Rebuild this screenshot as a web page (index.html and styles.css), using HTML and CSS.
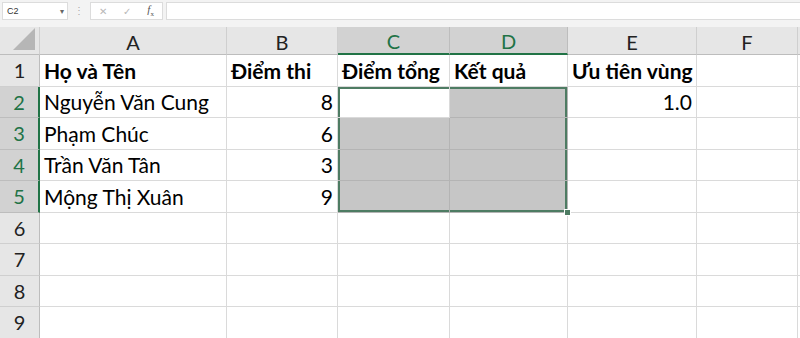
FILE: index.html
```html
<!DOCTYPE html>
<html lang="vi">
<head>
  <meta charset="UTF-8">
  <meta name="viewport" content="width=device-width, initial-scale=1.0">
  <title>Bảng điểm</title>
  <link rel="stylesheet" href="styles.css">
</head>
<body>
  <div class="formula-bar">
    <div class="name-box">
      <span>C2</span>
      <span class="arrow">&#9662;</span>
    </div>
    <div class="dots">&#8942;</div>
    <div class="fx-box">
      <span class="icon">&#10005;</span>
      <span class="icon">&#10003;</span>
      <span class="icon fx"><i>f</i><sub>x</sub></span>
    </div>
    <div class="input"></div>
  </div>

  <div class="sheet">
    <!-- header row -->
    <div class="corner"><span class="tri"></span></div>
    <div class="ch">A</div>
    <div class="ch">B</div>
    <div class="ch sel">C</div>
    <div class="ch sel">D</div>
    <div class="ch">E</div>
    <div class="ch">F</div>
    <div class="ch"></div>

    <!-- row 1 -->
    <div class="rh">1</div>
    <div class="c bold">Họ và Tên</div>
    <div class="c bold">Điểm thi</div>
    <div class="c bold">Điểm tổng</div>
    <div class="c bold">Kết quả</div>
    <div class="c bold">Ưu tiên vùng</div>
    <div class="c"></div>
    <div class="c"></div>

    <!-- row 2 (C2 is the active cell) -->
    <div class="rh sel">2</div>
    <div class="c">Nguyễn Văn Cung</div>
    <div class="c num">8</div>
    <div class="c rng top left"></div>
    <div class="c fill rng top right"></div>
    <div class="c num">1.0</div>
    <div class="c"></div>
    <div class="c"></div>

    <!-- row 3 -->
    <div class="rh sel">3</div>
    <div class="c">Phạm Chúc</div>
    <div class="c num">6</div>
    <div class="c fill rng left"></div>
    <div class="c fill rng right"></div>
    <div class="c"></div>
    <div class="c"></div>
    <div class="c"></div>

    <!-- row 4 -->
    <div class="rh sel">4</div>
    <div class="c">Trần Văn Tân</div>
    <div class="c num">3</div>
    <div class="c fill rng left"></div>
    <div class="c fill rng right"></div>
    <div class="c"></div>
    <div class="c"></div>
    <div class="c"></div>

    <!-- row 5 -->
    <div class="rh sel">5</div>
    <div class="c">Mộng Thị Xuân</div>
    <div class="c num">9</div>
    <div class="c fill rng left bottom"></div>
    <div class="c fill rng right bottom handle"></div>
    <div class="c"></div>
    <div class="c"></div>
    <div class="c"></div>

    <!-- rows 6-9 -->
    <div class="rh">6</div>
    <div class="c"></div><div class="c"></div><div class="c"></div><div class="c"></div><div class="c"></div><div class="c"></div><div class="c"></div>
    <div class="rh">7</div>
    <div class="c"></div><div class="c"></div><div class="c"></div><div class="c"></div><div class="c"></div><div class="c"></div><div class="c"></div>
    <div class="rh">8</div>
    <div class="c"></div><div class="c"></div><div class="c"></div><div class="c"></div><div class="c"></div><div class="c"></div><div class="c"></div>
    <div class="rh">9</div>
    <div class="c"></div><div class="c"></div><div class="c"></div><div class="c"></div><div class="c"></div><div class="c"></div><div class="c"></div>
  </div>
</body>
</html>
```

FILE: styles.css
```css
body {
  margin: 0;
  background-color: #f3f3f3;
  font-family: Lato, "Open Sans", sans-serif;
  color: #000;
  overflow: hidden;
}

.formula-bar {
  display: flex;
  align-items: flex-start;
  height: 27px;
  padding: 2px 0 0 2px;
  box-sizing: border-box;
  font-family: "Liberation Sans", Arial, sans-serif;
}

.name-box {
  display: flex;
  justify-content: space-between;
  align-items: center;
  width: 66px;
  height: 18px;
  background-color: #fff;
  border: 1px solid #dcdcdc;
  box-sizing: border-box;
  padding: 0 3px 0 4px;
  font-size: 9px;
  color: #333;
}

.name-box .arrow {
  font-size: 8px;
  color: #666;
}

.dots {
  width: 22px;
  line-height: 18px;
  text-align: center;
  font-size: 10px;
  color: #aaa;
}

.fx-box {
  display: flex;
  justify-content: space-around;
  align-items: center;
  width: 73px;
  height: 18px;
  background-color: #fff;
  border: 1px solid #dcdcdc;
  box-sizing: border-box;
}

.fx-box .icon {
  font-size: 10px;
  color: #b8b8b8;
}

.fx-box .fx {
  font-family: "Liberation Serif", serif;
  color: #555;
  font-size: 11px;
}

.fx-box .fx sub {
  font-size: 7px;
}

.input {
  flex: 1;
  height: 18px;
  margin-left: 3px;
  background-color: #fff;
  border: 1px solid #dcdcdc;
  border-right: none;
  box-sizing: border-box;
}

.sheet {
  display: grid;
  grid-template-columns: 40px 187px 111px 112px 118px 129px 101px 1fr;
  grid-template-rows: 28px repeat(9, 31.5px);
  background-color: #fff;
}

.corner {
  position: relative;
  background-color: #e6e6e6;
  border-right: 1px solid #cfcfcf;
  border-bottom: 1px solid #bdbdbd;
}

.corner .tri {
  position: absolute;
  right: 4px;
  bottom: 4px;
  width: 0;
  height: 0;
  border-left: 22px solid transparent;
  border-bottom: 22px solid #b6b6b6;
}

.ch {
  display: flex;
  justify-content: center;
  align-items: center;
  background-color: #e6e6e6;
  border-right: 1px solid #cfcfcf;
  border-bottom: 1px solid #bdbdbd;
  font-size: 20px;
  color: #222;
  padding-top: 2px;
}

.ch.sel {
  background-color: #d2d2d2;
  color: #217346;
  border-bottom: 2px solid #217346;
  border-right-color: #bdbdbd;
}

.rh {
  display: flex;
  justify-content: center;
  align-items: center;
  background-color: #e6e6e6;
  border-right: 1px solid #bdbdbd;
  border-bottom: 1px solid #cfcfcf;
  font-size: 20px;
  color: #222;
}

.rh.sel {
  background-color: #d2d2d2;
  color: #217346;
  border-right: 2px solid #217346;
  border-bottom-color: #bdbdbd;
}

.c {
  display: flex;
  align-items: center;
  padding: 0 4px;
  border-right: 1px solid #dadada;
  border-bottom: 1px solid #dadada;
  font-size: 21px;
  white-space: nowrap;
  overflow: hidden;
}

.c.bold {
  font-weight: bold;
}

.c.num {
  justify-content: flex-end;
}

.c.fill {
  background-color: #c6c6c6;
  border-color: #b4b4b4;
}

/* selected range outline, drawn on its edge cells */
.c.rng {
  --edge: #4e7c63;
}

.c.rng.top.left { box-shadow: inset 2px 2px 0 var(--edge); }
.c.rng.top.right { box-shadow: inset -2px 2px 0 var(--edge); }
.c.rng.left { box-shadow: inset 2px 0 0 var(--edge); }
.c.rng.right { box-shadow: inset -2px 0 0 var(--edge); }
.c.rng.left.bottom { box-shadow: inset 2px -2px 0 var(--edge); }
.c.rng.right.bottom { box-shadow: inset -2px -2px 0 var(--edge); }

.c.handle {
  position: relative;
  overflow: visible;
}

.c.handle::after {
  content: "";
  position: absolute;
  right: -4px;
  bottom: -4px;
  width: 5px;
  height: 5px;
  background-color: #4e7c63;
  border: 1px solid #fff;
}
```
